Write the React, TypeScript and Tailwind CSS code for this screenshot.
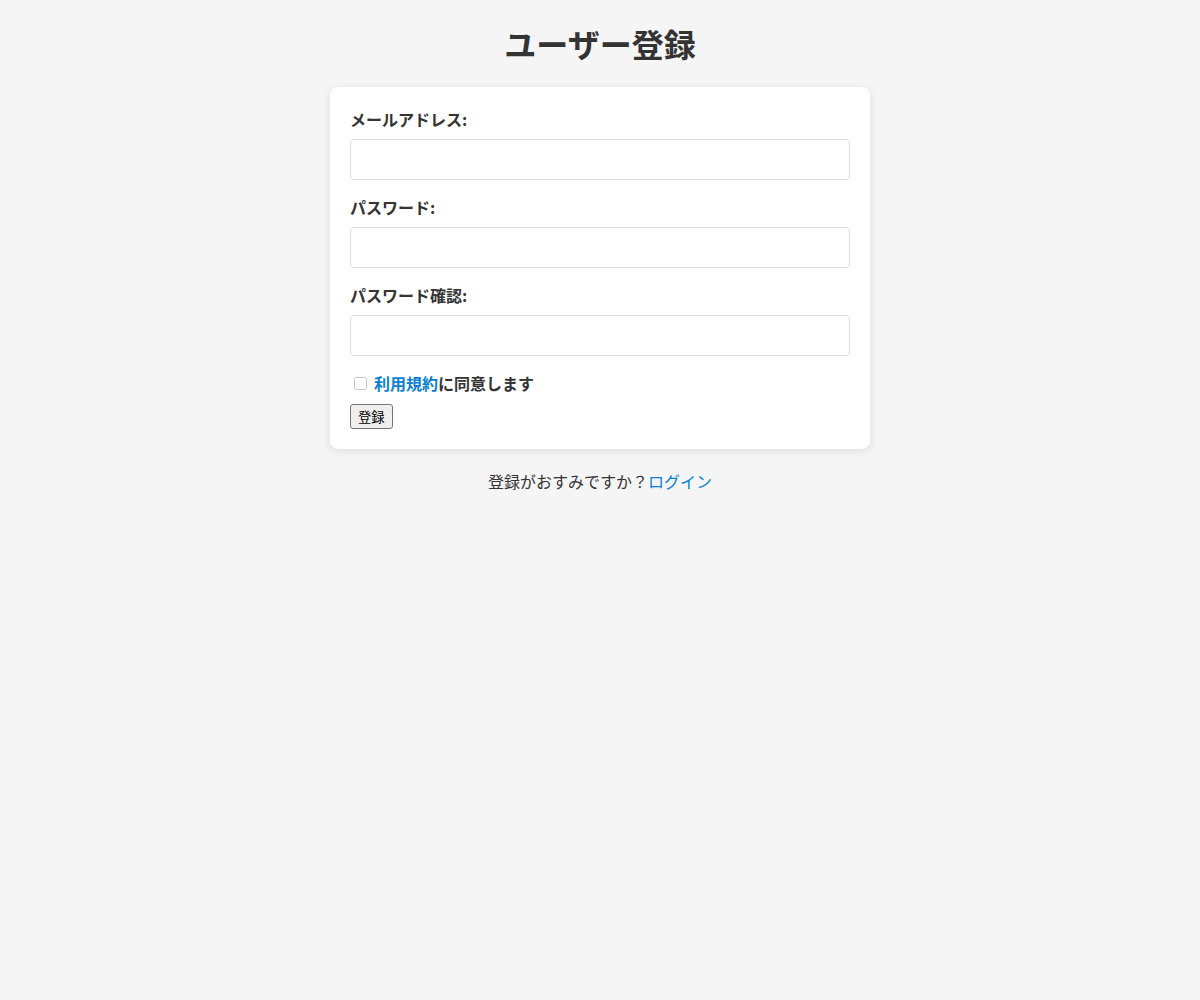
import React from "react";

const FONT = { fontFamily: '"Noto Sans CJK JP", "Noto Sans", sans-serif' };

export default function App() {
  return (
    <div className="min-h-[1000px] bg-[#f5f5f5] text-[#333]" style={FONT}>
      <div className="flex flex-col items-center pt-[19px]">
        <h1 className="text-[32px] font-bold leading-[48px] mb-[20px]">ユーザー登録</h1>

        {/* Form card */}
        <form className="w-[540px] bg-white rounded-[8px] p-[20px] shadow-[0_2px_8px_rgba(0,0,0,0.1)]">
          <div className="mb-[15px]">
            <label className="block font-bold text-[16px] leading-[24px] mb-[8px]">メールアドレス:</label>
            <input type="email" className="block w-full h-[41px] border border-[#ddd] rounded-[4px] px-[10px]" />
          </div>
          <div className="mb-[15px]">
            <label className="block font-bold text-[16px] leading-[24px] mb-[8px]">パスワード:</label>
            <input type="password" className="block w-full h-[41px] border border-[#ddd] rounded-[4px] px-[10px]" />
          </div>
          <div className="mb-[15px]">
            <label className="block font-bold text-[16px] leading-[24px] mb-[8px]">パスワード確認:</label>
            <input type="password" className="block w-full h-[41px] border border-[#ddd] rounded-[4px] px-[10px]" />
          </div>

          <label className="flex items-center h-[24px] mb-[8px] font-bold text-[16px]">
            <input type="checkbox" className="w-[13px] h-[13px] ml-[4px] mr-[7px] opacity-40" />
            <a href="#" className="text-[#0a7fd4]">利用規約</a>
            <span>に同意します</span>
          </label>

          <button
            type="button"
            className="h-[25px] px-[7px] text-[13.33px] leading-none text-black bg-[#efefef] border border-[#767676] rounded-[3px]"
          >
            登録
          </button>
        </form>

        <p className="mt-[20px] text-[16px] leading-[24px]">
          登録がおすみですか？<a href="#" className="text-[#0a7fd4]">ログイン</a>
        </p>
      </div>
    </div>
  );
}
